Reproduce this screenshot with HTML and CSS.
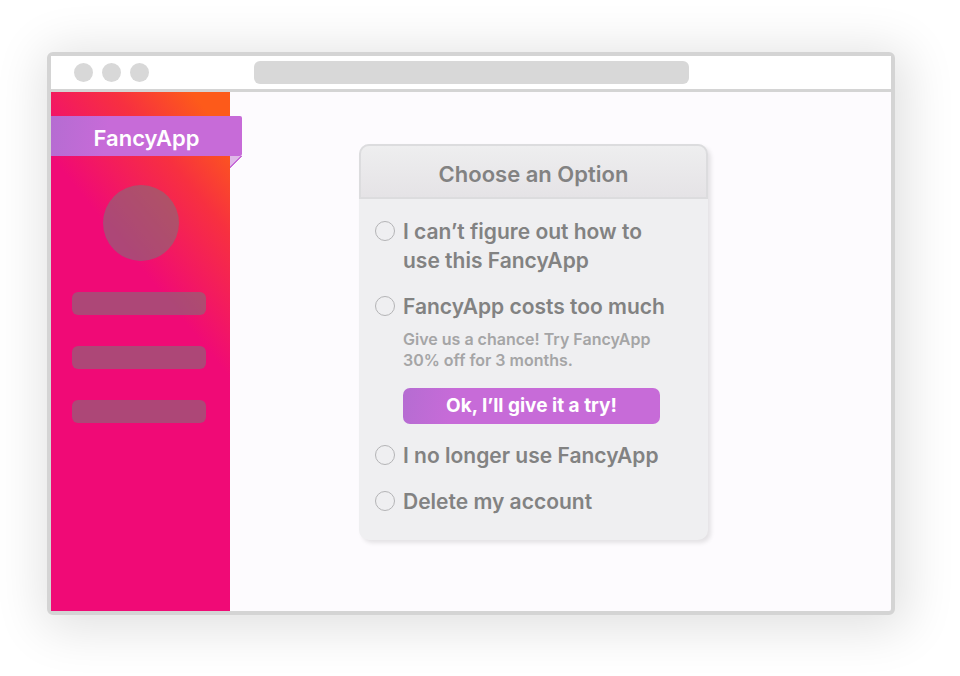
FILE: index.html
```html
<!DOCTYPE html>
<html lang="en">

<head>
   <meta charset="UTF-8">
   <meta name="viewport" content="width=device-width, initial-scale=1.0">
   <title>FancyApp</title>
   <link rel="stylesheet" href="styles.css">
</head>

<body>
   <div class="window">
      <div class="toolbar">
         <span class="dot"></span>
         <span class="dot"></span>
         <span class="dot"></span>
         <div class="address"></div>
      </div>

      <div class="content">
         <aside class="sidebar">
            <h1 class="ribbon">FancyApp</h1>
            <div class="avatar"></div>
            <div class="bar"></div>
            <div class="bar"></div>
            <div class="bar"></div>
         </aside>

         <main>
            <form class="card">
               <h2>Choose an Option</h2>
               <div class="options">
                  <div class="option">
                     <input type="radio" id="help" name="reason" value="help">
                     <label for="help">I can’t figure out how to use this FancyApp</label>
                  </div>
                  <div class="option">
                     <input type="radio" id="cost" name="reason" value="cost">
                     <label for="cost">FancyApp costs too much</label>
                     <div class="offer">
                        <p>Give us a chance! Try FancyApp 30% off for 3 months.</p>
                        <button type="button">Ok, I’ll give it a try!</button>
                     </div>
                  </div>
                  <div class="option">
                     <input type="radio" id="unused" name="reason" value="unused">
                     <label for="unused">I no longer use FancyApp</label>
                  </div>
                  <div class="option">
                     <input type="radio" id="delete" name="reason" value="delete">
                     <label for="delete">Delete my account</label>
                  </div>
               </div>
            </form>
         </main>
      </div>
   </div>
</body>

</html>
```

FILE: styles.css
```css
* {
   box-sizing: border-box;
}

body {
   display: flex;
   min-height: 100vh;
   margin: 0;
   padding: 52px 65px 61px 47px;
   background: #fff;
   color: #828282;
   font-family: 'Inter', sans-serif;
}

.window {
   display: flex;
   flex: 1;
   flex-direction: column;
   border: 4px solid #d4d4d4;
   border-radius: 6px;
   background: #fdfbfe;
   box-shadow: 4px 6px 50px 8px rgba(0, 0, 0, 0.12);
}

.toolbar {
   display: flex;
   align-items: center;
   gap: 9px;
   height: 36px;
   padding: 0 202px 0 23px;
   border-bottom: 3px solid #d4d4d4;
   background: #fff;
}

.dot {
   width: 19px;
   height: 19px;
   border-radius: 50%;
   background: #d8d8d8;
}

.address {
   flex: 1;
   height: 23px;
   margin-left: 96px;
   border-radius: 6px;
   background: #d8d8d8;
}

.content {
   display: flex;
   flex: 1;
}

.sidebar {
   width: 179px;
   padding-top: 24px;
   background: linear-gradient(231deg, #fd5a1a 30px, #f73040 90px, #f00a76 180px);
}

.ribbon {
   position: relative;
   height: 40px;
   margin: 0 -12px 29px 0;
   border-radius: 0 2px 2px 0;
   background: linear-gradient(100deg, #b56cd2, #c76bd8 30%);
   color: #fff;
   font-size: 22px;
   font-weight: 600;
   line-height: 44px;
   text-align: center;
}

/* folded corner under the ribbon */
.ribbon::after {
   content: '';
   position: absolute;
   top: 100%;
   right: 0;
   width: 12px;
   height: 12px;
   background: linear-gradient(135deg, #dfb8e8 42%, #c76bd8 43%, #c76bd8 50%, rgba(199, 107, 216, 0) 51%);
}

.avatar {
   width: 76px;
   height: 76px;
   margin: 0 auto;
   border-radius: 50%;
   background: rgba(128, 112, 120, 0.6);
}

.bar {
   height: 23px;
   margin: 31px 24px 0 21px;
   border-radius: 6px;
   background: rgba(128, 112, 120, 0.6);
}

main {
   flex: 1;
   padding: 52px 20px 52px 129px;
}

.card {
   max-width: 349px;
   border-radius: 10px;
   background: #efeff1;
   box-shadow: 3px 3px 4px rgba(0, 0, 0, 0.1);
}

h2 {
   height: 55px;
   margin: 0;
   border: 2px solid #dcdcde;
   border-radius: 10px 10px 0 0;
   background: linear-gradient(#eeeeef, #e5e3e6);
   font-size: 22px;
   font-weight: 600;
   line-height: 56px;
   text-align: center;
}

.options {
   display: grid;
   gap: 17px;
   padding: 18px 36px 24px 16px;
}

.option {
   display: grid;
   grid-template-columns: 20px 1fr;
   column-gap: 8px;
   align-items: start;
}

.option input {
   appearance: none;
   width: 20px;
   height: 20px;
   margin: 4px 0 0;
   border: 1px solid #b4b4b6;
   border-radius: 50%;
}

.option input:checked {
   border: 6px solid #c76bd8;
}

.option label {
   font-size: 21px;
   font-weight: 600;
   line-height: 29px;
}

.offer {
   grid-column: 2;
   padding-right: 12px;
}

.offer p {
   margin: 8px 0 17px;
   color: #a5a5a6;
   font-size: 16px;
   font-weight: 600;
   line-height: 21px;
}

.offer button {
   width: 100%;
   height: 36px;
   padding: 0 0 2px;
   border: 0;
   border-radius: 7px;
   background: linear-gradient(100deg, #b56cd2, #c76bd8 20%);
   color: #fff;
   font-family: inherit;
   font-size: 19px;
   font-weight: 700;
}
```
